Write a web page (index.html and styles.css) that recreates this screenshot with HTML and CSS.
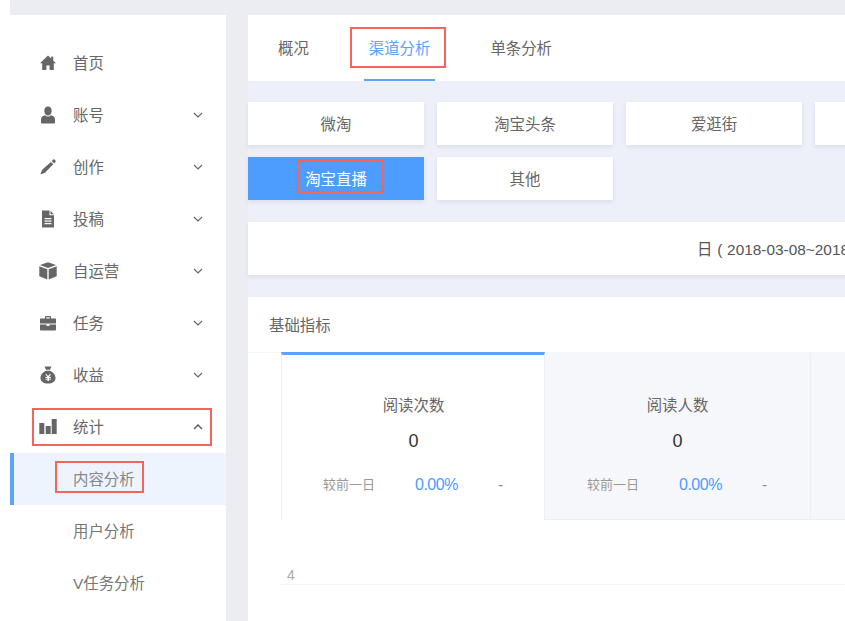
FILE: index.html
```html
<!DOCTYPE html>
<html>
	<head>
		<meta charset="utf-8">
		<title>内容分析</title>
		<link rel="stylesheet" href="styles.css">
	</head>
	<body>
		<div class="page">
			<aside class="sidebar">
				<a class="nav-item">
					<svg class="nav-icon" viewBox="0 0 18 18"><path d="M9 1.500 1 9.200h2.200V16h4.200v-4.600h3.200V16h4.200V9.200H17l-2.800-2.700V2.600h-2v2L9 1.500z"/></svg>
					<span class="nav-text">首页</span>
				</a>
				<a class="nav-item">
					<svg class="nav-icon" viewBox="0 0 18 18"><path d="M9 .5c2.300 0 3.700 1.900 3.700 4.200S11.300 9.500 9 9.500 5.300 7 5.300 4.700 6.700.5 9 .5zM6.200 9.200c.8.900 1.700 1.300 2.800 1.300s2-.4 2.800-1.300c2.300.5 4.200 1.700 4.200 4.300v3.200c0 .4-.3.800-.8.800H2.800c-.5 0-.8-.4-.8-.8v-3.200c0-2.600 1.900-3.800 4.200-4.300z"/></svg>
					<span class="nav-text">账号</span>
					<svg class="chevron" viewBox="0 0 10 6"><path d="M1 1l4 4 4-4"/></svg>
				</a>
				<a class="nav-item">
					<svg class="nav-icon" viewBox="0 0 18 18"><path d="M14.300 1.500c.4-.3.900-.3 1.200 0l1 1c.4.400.4.900.1 1.300l-1.500 1.700-2.400-2.400 1.600-1.600zM11.900 3.900l2.400 2.400-8.100 8.100-3.900 1.800c-.6.200-.9-.2-.7-.7l1.800-3.900 8.500-7.700z"/></svg>
					<span class="nav-text">创作</span>
					<svg class="chevron" viewBox="0 0 10 6"><path d="M1 1l4 4 4-4"/></svg>
				</a>
				<a class="nav-item">
					<svg class="nav-icon" viewBox="0 0 18 18"><path fill-rule="evenodd" d="M3 .5h7.500v4.700H15v12.300H3V.5zM11.500.8 14.800 4.200h-3.300V.8zM5.500 8v1.200h7V8h-7zm0 2.500v1.200h7v-1.200h-7zm0 2.500v1.200h7V13h-7z"/></svg>
					<span class="nav-text">投稿</span>
					<svg class="chevron" viewBox="0 0 10 6"><path d="M1 1l4 4 4-4"/></svg>
				</a>
				<a class="nav-item">
					<svg class="nav-icon" viewBox="0 0 18 18"><path d="M9 .3l8 2.700L9 6 1 3 9 .3zM.3 4.200l8 3v10.300l-8-3.200V4.200zM17.700 4.200v10.100l-8 3.200V7.200l8-3z"/></svg>
					<span class="nav-text">自运营</span>
					<svg class="chevron" viewBox="0 0 10 6"><path d="M1 1l4 4 4-4"/></svg>
				</a>
				<a class="nav-item">
					<svg class="nav-icon" viewBox="0 0 18 18"><path fill-rule="evenodd" d="M6 4.500V3c0-.6.400-1 1-1h4c.6 0 1 .4 1 1v1.500h4.200c.5 0 .8.400.8.800v4.200H1V5.300c0-.4.300-.8.800-.8H6zm1.300-1.200v1.200h3.400V3.300H7.300zM1 10.500h6.500V12h3v-1.500H17v5.200c0 .4-.3.800-.8.800H1.800c-.5 0-.8-.4-.8-.8v-5.200z"/></svg>
					<span class="nav-text">任务</span>
					<svg class="chevron" viewBox="0 0 10 6"><path d="M1 1l4 4 4-4"/></svg>
				</a>
				<a class="nav-item">
					<svg class="nav-icon" viewBox="0 0 18 18"><path fill-rule="evenodd" d="M5.500.5h7l-1.500 3.300H7L5.500.5zM7 4.800h4c3 1.200 5.500 3.800 5.500 7.200 0 3.500-3 5.500-7.500 5.500S1.500 15.500 1.500 12c0-3.400 2.500-6 5.500-7.200zM6.300 8.200 8.300 11H6.500v1h2v.8h-2v1h2V15h1.400v-1.200h2v-1h-2V12h2v-1h-1.800l2-2.800h-1.500L9 10.300 7.800 8.200H6.300z"/></svg>
					<span class="nav-text">收益</span>
					<svg class="chevron" viewBox="0 0 10 6"><path d="M1 1l4 4 4-4"/></svg>
				</a>
				<a class="nav-item">
					<svg class="nav-icon" viewBox="0 0 18 18"><path d="M.3 5h5v11h-5zM6.700 8h5v8h-5zM12.700 1h5v15h-5z"/></svg>
					<span class="nav-text">统计</span>
					<svg class="chevron chevron-open" viewBox="0 0 10 6"><path d="M1 5l4-4 4 4"/></svg>
					<span class="mark mark-nav"></span>
				</a>
				<a class="nav-item sub-item active">
					<span class="nav-text">内容分析</span>
					<span class="mark mark-sub"></span>
				</a>
				<a class="nav-item sub-item">
					<span class="nav-text">用户分析</span>
				</a>
				<a class="nav-item sub-item">
					<span class="nav-text">V任务分析</span>
				</a>
			</aside>
			<main class="main">
				<nav class="tabs">
					<a class="tab">概况</a>
					<a class="tab tab-active">渠道分析<span class="mark mark-tab"></span></a>
					<a class="tab">单条分析</a>
				</nav>
				<div class="channels">
					<a class="channel">微淘</a>
					<a class="channel">淘宝头条</a>
					<a class="channel">爱逛街</a>
					<a class="channel"></a>
					<a class="channel channel-active">淘宝直播<span class="mark mark-channel"></span></a>
					<a class="channel">其他</a>
				</div>
				<div class="date-bar">日 ( 2018-03-08~2018</div>
				<section class="panel">
					<h2 class="panel-title">基础指标</h2>
					<div class="stats">
						<div class="stat stat-active">
							<div class="stat-name">阅读次数</div>
							<div class="stat-value">0</div>
							<div class="stat-compare">
								<span class="compare-label">较前一日</span>
								<span class="compare-rate">0.00%</span>
								<span class="compare-trend">-</span>
							</div>
						</div>
						<div class="stat">
							<div class="stat-name">阅读人数</div>
							<div class="stat-value">0</div>
							<div class="stat-compare">
								<span class="compare-label">较前一日</span>
								<span class="compare-rate">0.00%</span>
								<span class="compare-trend">-</span>
							</div>
						</div>
						<div class="stat"></div>
					</div>
					<div class="chart">
						<span class="chart-tick">4</span>
					</div>
				</section>
			</main>
		</div>
	</body>
</html>
```

FILE: styles.css
```css
* {
	margin: 0;
	padding: 0;
	box-sizing: border-box;
}
html, body {
	height: 100%;
	overflow: hidden;
}
body {
	padding-left: 10px;
	background: #fff;
	color: #666;
	font-family: "Liberation Sans", "Noto Sans CJK SC", sans-serif;
	font-size: 15.4px;
}
.page {
	display: flex;
	gap: 22px;
	width: 1400px;
	height: 100%;
	padding-top: 15px;
	background: #ebedf3;
}
.mark {
	position: absolute;
	border: 2px solid #f4645a;
	pointer-events: none;
}

/* sidebar */
.sidebar {
	flex: none;
	width: 216px;
	padding-top: 22px;
	background: #fff;
}
.nav-item {
	position: relative;
	display: flex;
	align-items: center;
	height: 52px;
	padding: 0 23px 0 29px;
}
.nav-icon {
	flex: none;
	width: 18px;
	height: 18px;
	margin-right: 16px;
	fill: #666;
}
.nav-text {
	flex: 1;
	padding-bottom: 2px;
}
.chevron {
	flex: none;
	width: 10px;
	height: 6px;
	fill: none;
	stroke: #666;
	stroke-width: 1.2;
}
.chevron-open {
	stroke-width: 1.6;
}
.sub-item {
	padding-left: 63px;
	color: #777;
}
.active {
	padding-left: 59px;
	border-left: 4px solid #5ea2ff;
	background: #edf4fe;
	color: #888;
}
.mark-nav {
	left: 22px;
	top: 7px;
	width: 180px;
	height: 38px;
}
.mark-sub {
	left: 41px;
	top: 8px;
	width: 89px;
	height: 32px;
}

/* main */
.main {
	flex: none;
	width: 1100px;
	background: #edf0f8;
}
.tabs {
	display: flex;
	gap: 50px;
	height: 66px;
	padding-left: 25px;
	background: #fff;
}
.tab {
	position: relative;
	padding: 0 5px;
	line-height: 68px;
}
.tab-active {
	border-bottom: 2px solid #5ea2ff;
	color: #5ea2ff;
}
.mark-tab {
	left: -14px;
	top: 12px;
	width: 96px;
	height: 41px;
}
.channels {
	display: grid;
	grid-template-columns: repeat(4, 176px);
	gap: 12px 13px;
	padding-top: 21px;
}
.channel {
	position: relative;
	height: 43px;
	background: #fff;
	box-shadow: 0 2px 4px rgba(60, 70, 110, .1);
	line-height: 45px;
	text-align: center;
}
.channel-active {
	background: #4d9cff;
	color: #fff;
}
.mark-channel {
	left: 49px;
	top: 3px;
	width: 86px;
	height: 33px;
}
.date-bar {
	height: 53px;
	margin-top: 22px;
	padding-left: 449px;
	background: #fff;
	box-shadow: 0 2px 4px rgba(60, 70, 110, .1);
	color: #555;
	line-height: 55px;
	word-spacing: .5px;
	white-space: nowrap;
}
.panel {
	height: 330px;
	margin-top: 22px;
	background: #fff;
}
.panel-title {
	height: 55px;
	padding-left: 21px;
	font-size: 15.4px;
	font-weight: normal;
	line-height: 57px;
}
.stats {
	display: flex;
	height: 168px;
	padding-left: 33px;
	background: #fff;
	border-top: 1px solid #f6f7fa;
}
.stat {
	flex: none;
	width: 266px;
	padding-top: 42px;
	border-right: 1px solid #eceef4;
	border-bottom: 1px solid #eceef4;
	background: #f6f7fa;
	text-align: center;
}
.stat-active {
	width: 264px;
	padding-top: 40px;
	padding-left: 1px;
	margin-top: -1px;
	border-top: 3px solid #5ea2ff;
	border-left: 1px solid #eceef4;
	border-bottom: 0;
	background: #fff;
}
.stat-name {
	line-height: 22px;
}
.stat-value {
	margin-top: 13px;
	color: #333;
	font-size: 18px;
	line-height: 22px;
}
.stat-compare {
	display: flex;
	align-items: center;
	height: 24px;
	margin-top: 21px;
	padding-left: 42px;
	text-align: left;
}
.stat-active .stat-compare {
	padding-left: 40px;
}
.compare-label {
	width: 92px;
	padding-bottom: 3px;
	color: #999;
	font-size: 13px;
}
.compare-rate {
	width: 83px;
	color: #4d9cff;
	font-size: 16px;
	letter-spacing: -.5px;
}
.compare-trend {
	color: #888;
}
.chart {
	height: 65px;
	margin-left: 33px;
	padding: 47px 0 0 6px;
	border-bottom: 1px solid #f3f4fa;
}
.chart-tick {
	display: block;
	color: #aaa;
	font-size: 14px;
	line-height: 16px;
}
```
